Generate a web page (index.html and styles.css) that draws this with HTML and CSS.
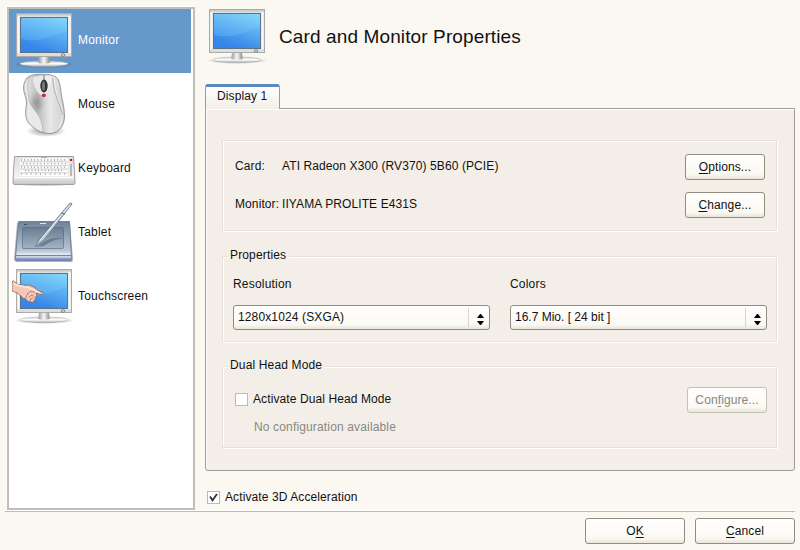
FILE: index.html
```html
<!DOCTYPE html>
<html lang="en">
<head>
<meta charset="utf-8">
<title>Card and Monitor Properties</title>
<link rel="stylesheet" href="styles.css">
</head>
<body>
<svg class="defs" width="0" height="0" aria-hidden="true">
  <defs>
    <linearGradient id="screen" x1="0.75" y1="0" x2="0.35" y2="1">
      <stop offset="0" stop-color="#7fd2f8"/><stop offset="1" stop-color="#3d90ec"/>
    </linearGradient>
    <linearGradient id="screenLow" x1="1" y1="0" x2=".2" y2="1">
      <stop offset="0" stop-color="#62b8f4"/><stop offset=".8" stop-color="#2b7be5"/>
    </linearGradient>
    <linearGradient id="neck">
      <stop offset="0" stop-color="#999"/><stop offset=".5" stop-color="#f8f8f8"/><stop offset="1" stop-color="#888"/>
    </linearGradient>
    <linearGradient id="base" x1="0" y1="0" x2="0" y2="1">
      <stop offset="0" stop-color="#ccc"/><stop offset=".5" stop-color="#fff"/><stop offset="1" stop-color="#aaa"/>
    </linearGradient>
    <linearGradient id="mouseBody" x1="0" y1="0" x2="1" y2="0">
      <stop offset="0" stop-color="#eee"/><stop offset=".35" stop-color="#bcbcbc"/><stop offset=".65" stop-color="#e8e8e8"/><stop offset="1" stop-color="#d0d0d0"/>
    </linearGradient>
    <linearGradient id="keys" x1="0" y1="0" x2="0" y2="1">
      <stop offset="0" stop-color="#e0e0e0"/><stop offset=".7" stop-color="#f0f0f0"/><stop offset="1" stop-color="#c4c4c4"/>
    </linearGradient>
    <linearGradient id="slate" x1="0" y1="0" x2="0" y2="1">
      <stop offset="0" stop-color="#6d8299"/><stop offset=".75" stop-color="#b9c7d5"/><stop offset=".86" stop-color="#e6eef5"/><stop offset="1" stop-color="#8497b4"/>
    </linearGradient>
    <linearGradient id="pad" x1="0" y1="0" x2="0" y2="1">
      <stop offset="0" stop-color="#697d93"/><stop offset="1" stop-color="#a3b3c3"/>
    </linearGradient>
    <radialGradient id="shade"><stop offset="0" stop-color="#000" stop-opacity=".45"/><stop offset="1" stop-color="#000" stop-opacity="0"/></radialGradient>
    <symbol id="monitor" viewBox="0 0 64 64">
      <ellipse cx="32" cy="55.600" rx="31" ry="3.400" fill="url(#shade)"/>
      <ellipse cx="32" cy="54.800" rx="24" ry="2.800" fill="url(#base)" stroke="#aaa" stroke-width=".5"/>
      <path d="M27 48h10l.7 6q-5.700 1.500-11.400 0z" fill="url(#neck)"/>
      <rect x="4.500" y="4.500" width="55" height="43" fill="#dededd" stroke="#a9aaaa"/>
      <rect x="5" y="5" width="54" height="1.500" fill="#cacaca"/>
      <path d="M6.500 7v37M57.500 7v37" stroke="#f8f8f8" stroke-width="2"/>
      <rect x="8.500" y="8.500" width="47" height="35" fill="url(#screen)" stroke="#5c7286"/>
      <path d="M9 30Q21 33 34 29T55 21V43H9z" fill="url(#screenLow)" opacity=".55"/>
      <ellipse cx="51" cy="46" rx="1.800" ry="1.300" fill="#ddd" stroke="#666" stroke-width=".7"/>
    </symbol>
  </defs>
</svg>
<div class="window">
  <div class="content">
    <nav class="sidebar">
      <div class="item selected"><svg class="icon"><use href="#monitor"/></svg><span>Monitor</span></div>
      <div class="item">
        <svg class="icon" viewBox="0 0 64 64">
          <ellipse cx="34" cy="58" rx="20" ry="6" fill="url(#shade)"/>
          <path d="M17 3.500C21 .5 38 .3 43 3.500 47 5.500 48 11 48.500 16 49.500 26 52.500 33 52.500 43 52.500 53 47 59.500 39 60.500 30 61 22 56 17 50.500 12 45 14 36 14.500 30 14.500 24 11.500 21 11.500 14 12 9 14 5 17 3.500z" fill="url(#mouseBody)" stroke="#909090" stroke-width=".9"/>
          <ellipse cx="24" cy="30" rx="9" ry="12" fill="url(#shade)" opacity=".5"/>
          <path d="M18 4C14 9 16 19 17 27 19 37 31 41 31 59 25 58 20 53 17 50 12.500 44 14.500 37 15 30 15 24 12 20 12 14 12.500 9 15 5 18 4z" fill="#e9e9e9" stroke="#aaa" stroke-width=".6"/>
          <path d="M21 4.500C26 2 35 2 41 5 38 9 38 18 32 23 26 22 21 14 21 4.500z" fill="#f1f1f1" opacity=".8"/>
          <path d="M42 4q1 16 6 27t-1 24" fill="none" stroke="#eee" stroke-width="1.200"/>
          <path d="M40.500 5q1 13 5 22t5 15" fill="none" stroke="#999" stroke-width=".7"/>
          <path d="M32 2v5" stroke="#777"/>
          <ellipse cx="32" cy="13" rx="3.700" ry="6.500" fill="#333"/>
          <ellipse cx="31.500" cy="13" rx="1.500" ry="4.800" fill="#777"/>
          <circle cx="31.800" cy="22.300" r="1.900" fill="#d6202a"/>
        </svg><span>Mouse</span></div>
      <div class="item">
        <svg class="icon" viewBox="0 0 64 64">
          <ellipse cx="32" cy="47" rx="32" ry="2.500" fill="url(#shade)"/>
          <path d="M2.500 19.500h59q1 12 1.500 27l-1 1H2l-1-1q.5-16 1.500-27z" fill="url(#keys)" stroke="#a0a0a0"/>
          <path d="M7.500 21h49v18h-49z" fill="#ededed"/>
          <path d="M2 40.500h60" stroke="#fff"/>
          <g stroke="#fff" stroke-width="2"><path d="M8 22.500h48M8 26.500h48M8 30.500h48M8 34.500h48M8 38h48"/></g>
          <g fill="none" stroke="#929292" stroke-width="1.700"><path d="M9 22.800h46" stroke-dasharray=".8 2.500"/><path d="M11 26.500h43" stroke-dasharray=".8 2.700"/><path d="M9 30.300h46" stroke-dasharray=".8 2.500"/><path d="M13 33.500h37" stroke-dasharray=".8 2.500"/><path d="M9 37h46" stroke-dasharray=".8 4"/></g>
          <path d="M8 24.800h48M8 28.500h48M8 32h48M8 35.500h48" stroke="#c5c5c5" stroke-width=".5"/>
          <path d="M59 27v12" stroke="#aaa" stroke-width="1.500"/>
          <path d="M58 22h2.200v2H58z" fill="#d00c18"/><path d="M29 20.500h6" stroke="#999" stroke-width=".7"/>
        </svg><span>Keyboard</span></div>
      <div class="item">
        <svg class="icon" viewBox="0 0 64 64">
          <path d="M5 22L2 58q1 4 5 3h50q4 1 4-3L58 22z" fill="#000" opacity=".3"/>
          <path d="M6.500 20.500h51l2 36-.5 3H4l-.5-3z" fill="url(#slate)" stroke="#70819a"/>
          <path d="M4 54h55v1H4z" fill="#73849c"/><path d="M4 57.500h55v2H4z" fill="#788aca"/>
          <rect x="10.500" y="26.500" width="41" height="21" rx="1" fill="url(#pad)" stroke="#50657d" stroke-width=".6"/>
          <path d="M24 46q13-11 28-9-13 2-20 8z" fill="#3f526a" opacity=".45"/>
          <path d="M28 22.500h6" stroke="#dfe7ee"/><path d="M12 23.500h3" stroke="#435367"/>
          <path d="M23 46l4-7L57 3q3-2 3 0L32 39z" fill="#b7c4d1" stroke="#65778b" stroke-width=".8"/>
          <path d="M28 39.500L58 4" stroke="#f5f8fc"/><path d="M49 12l4 1" stroke="#5d7085"/>
        </svg><span>Tablet</span></div>
      <div class="item">
        <svg class="icon" viewBox="0 0 64 64">
          <use href="#monitor"/>
          <path d="M0 17Q1 14.500 3 17L6 19.500Q12 21 17 20 23 22 26 25.500L31 27.500Q33 29.500 30 29.500L24 28 25 31Q24 33 23 32 25 35 22 35 23 38 19 37 15 37 14 34 11 34 9 31 7 28 0 26z" fill="#f5c8b5" stroke="#8f5f55" stroke-width=".8"/>
          <path d="M2 19q7 3 13 3l7 3 6 3" fill="none" stroke="#ffe6da" stroke-width="1.500"/>
          <path d="M15 29q3-4 8-2M17 32.500q2-4 5-1M14 33q0-3 2-4M18 36q0-3 3-3" fill="none" stroke="#a5685b" stroke-width=".8"/>
        </svg><span>Touchscreen</span></div>
    </nav>
    <main class="main">
      <header class="header"><svg class="icon"><use href="#monitor"/></svg><h1>Card and Monitor Properties</h1></header>
      <div class="tab"><span>Display 1</span></div>
      <section class="pane">
        <div class="group devices">
          <div class="row"><span class="key">Card:</span><span class="value card">ATI Radeon X300 (RV370) 5B60 (PCIE)</span><button class="btn"><span><u>O</u>ptions...</span></button></div>
          <div class="row"><span class="key">Monitor:</span><span class="value">IIYAMA PROLITE E431S</span><button class="btn"><span><u>C</u>hange...</span></button></div>
        </div>
        <div class="group properties">
          <h2 class="legend">Properties</h2>
          <div class="field"><label>Resolution</label><div class="select"><span>1280x1024 (SXGA)</span><i class="arrows"><svg width="7" height="11" viewBox="0 0 7 11"><path d="M0 4h7L4 0H3zM0 7h7L4 11H3z"/></svg></i></div></div>
          <div class="field"><label>Colors</label><div class="select"><span class="depth">16.7 Mio. [ 24 bit ]</span><i class="arrows"><svg width="7" height="11" viewBox="0 0 7 11"><path d="M0 4h7L4 0H3zM0 7h7L4 11H3z"/></svg></i></div></div>
        </div>
        <div class="group dual">
          <h2 class="legend">Dual Head Mode</h2>
          <div class="dual-text"><div class="check"><i class="box"></i><span>Activate Dual Head Mode</span></div><p class="note">No configuration available</p></div>
          <button class="btn disabled"><span>Con<u>f</u>igure...</span></button>
        </div>
      </section>
      <div class="check accel"><i class="box"><svg width="11" height="11" viewBox="0 0 11 11"><path d="M2 4.500l2.500 3.800L9 2" fill="none" stroke="#2d363c" stroke-width="1.800"/></svg></i><span>Activate 3D Acceleration</span></div>
    </main>
  </div>
  <footer class="footer"><button class="btn"><span>O<u>K</u></span></button><button class="btn"><span><u>C</u>ancel</span></button></footer>
</div>
</body>
</html>
```
FILE: styles.css
```css
* { box-sizing: border-box; }
body {
  margin: 0;
  background: #fbf8f1;
  color: #111;
  font: 12px/14px "Liberation Sans", Arial, sans-serif;
  letter-spacing: .1px;
}
.defs { display: block; }
.window { width: 800px; height: 550px; padding: 7px 5px 0; overflow: hidden; }
.content { display: flex; height: 504px; padding-left: 2px; }
h1, h2, p { margin: 0; font-weight: normal; }

.sidebar {
  width: 188px;
  height: 503px;
  border: 2px solid #c0bfb7;
  background: #fff;
  padding-right: 2px;
  box-shadow: -1px -1px #fff;
}
.item { display: flex; align-items: center; height: 64px; padding-left: 3px; }
.item span { margin: -2px 0 0 2px; letter-spacing: .2px; }
.selected { background: #6698cb; color: #fff; }
.icon { width: 64px; height: 64px; flex: none; display: block; }

.main { width: 590px; margin-left: 10px; }
.header { display: flex; height: 77px; }
.header .icon { margin-top: -2px; }
h1 { margin: 19px 0 0 10px; font-size: 19px; line-height: 22px; letter-spacing: .12px; }

.tab {
  position: relative;
  width: 75px;
  height: 25px;
  padding: 2px 0 0 11px;
  border: 1px solid #a09c91;
  border-top: 3px solid #5a89bf;
  border-bottom: 0;
  border-radius: 3px 3px 0 0;
  background: linear-gradient(#fff, #f3efe8);
  z-index: 1;
}
.pane {
  height: 363px;
  margin-top: -1px;
  padding: 31px 16px 0;
  border: 1px solid #a09c91;
  border-radius: 0 0 3px 3px;
  background: #f3efe8;
  box-shadow: inset 1px 1px #fff;
}
.group { position: relative; border: 1px solid #e5e2db; box-shadow: 1px 1px #fff, inset 1px 1px #fff; width: 555px; }
.legend { position: absolute; left: 4px; top: -9px; padding: 0 3px; background: #f3efe8; font-size: 12px; line-height: 14px; letter-spacing: .15px; }

.devices { height: 91px; padding: 13px 11px 13px 12px; }
.row { display: flex; align-items: center; height: 26px; margin-bottom: 12px; }
.key { width: 47px; margin-top: -2px; white-space: nowrap; }
.value { margin-top: -2px; }
.row .btn { margin-left: auto; }

.btn {
  display: flex;
  align-items: center;
  justify-content: center;
  width: 80px;
  height: 26px;
  padding: 0 0 1px;
  border: 1px solid #918c7d;
  border-radius: 3px;
  background: linear-gradient(#fff, #fbf9f3 80%, #e9e5d8);
  color: #111;
  font: inherit;
  letter-spacing: .1px;
}
.btn u { text-underline-offset: 2px; text-decoration-thickness: 1px; }
.disabled { color: #89877f; border-color: #c4c0b4; }

.properties { display: flex; gap: 20px; height: 86px; margin-top: 25px; padding: 20px 10px 0; }
.field { width: 257px; flex: none; }
.field label { display: block; margin-bottom: 14px; letter-spacing: .2px; }
.select {
  display: flex;
  align-items: center;
  justify-content: space-between;
  height: 25px;
  padding-left: 4px;
  border: 1px solid #918c7d;
  border-radius: 3px;
  background: linear-gradient(#fff, #fbf9f3 80%, #e9e5d8);
}
.select span { margin-top: -2px; letter-spacing: .13px; }
.select .depth { letter-spacing: 0; }
.arrows { display: flex; align-items: center; justify-content: center; width: 21px; height: 19px; padding: 3px 0 0 2px; border-left: 1px solid #d9d6ce; }

.dual { display: flex; justify-content: space-between; height: 82px; margin-top: 24px; padding: 20px 9px 0 12px; }
.dual-text { padding-top: 5px; }
.check { display: flex; align-items: center; height: 14px; }
.check span { margin-left: 5px; }
.box { display: block; width: 13px; height: 13px; border: 1px solid #bdbbb1; background: #fff; }
.box svg { display: block; }
.note { margin: 14px 0 0 19px; color: #89877f; letter-spacing: .15px; }
.accel { margin: 19px 0 0 2px; }

.footer { display: flex; justify-content: flex-end; gap: 10px; padding-top: 6px; border-top: 1px solid #bdbbb4; box-shadow: 0 -1px #fff; }
.footer .btn { width: 100px; }
```
